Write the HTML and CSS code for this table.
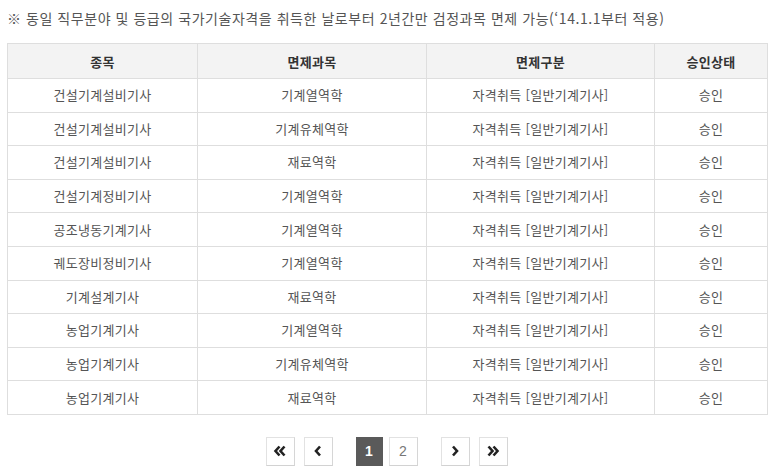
FILE: index.html
```html
<!DOCTYPE html>
<html lang="ko">
<head>
<meta charset="utf-8">
<link rel="stylesheet" href="styles.css">
</head>
<body>
<div class="wrap">
  <p class="note">※ 동일 직무분야 및 등급의 국가기술자격을 취득한 날로부터 2년간만 검정과목 면제 가능(‘14.1.1부터 적용)</p>
  <table class="grid">
    <colgroup>
      <col class="c1"><col class="c2"><col class="c3"><col class="c4">
    </colgroup>
    <thead>
      <tr><th>종목</th><th>면제과목</th><th>면제구분</th><th>승인상태</th></tr>
    </thead>
    <tbody>
      <tr><td>건설기계설비기사</td><td>기계열역학</td><td>자격취득 [일반기계기사]</td><td>승인</td></tr>
      <tr><td>건설기계설비기사</td><td>기계유체역학</td><td>자격취득 [일반기계기사]</td><td>승인</td></tr>
      <tr><td>건설기계설비기사</td><td>재료역학</td><td>자격취득 [일반기계기사]</td><td>승인</td></tr>
      <tr><td>건설기계정비기사</td><td>기계열역학</td><td>자격취득 [일반기계기사]</td><td>승인</td></tr>
      <tr><td>공조냉동기계기사</td><td>기계열역학</td><td>자격취득 [일반기계기사]</td><td>승인</td></tr>
      <tr><td>궤도장비정비기사</td><td>기계열역학</td><td>자격취득 [일반기계기사]</td><td>승인</td></tr>
      <tr><td>기계설계기사</td><td>재료역학</td><td>자격취득 [일반기계기사]</td><td>승인</td></tr>
      <tr><td>농업기계기사</td><td>기계열역학</td><td>자격취득 [일반기계기사]</td><td>승인</td></tr>
      <tr><td>농업기계기사</td><td>기계유체역학</td><td>자격취득 [일반기계기사]</td><td>승인</td></tr>
      <tr><td>농업기계기사</td><td>재료역학</td><td>자격취득 [일반기계기사]</td><td>승인</td></tr>
    </tbody>
  </table>
  <nav class="pager">
    <div class="group">
      <a class="pbtn" href="#" aria-label="처음"><svg width="14" height="12" viewBox="0 0 14 12"><path d="M6.5 1.5 L2.5 6 L6.5 10.5 M11.5 1.5 L7.5 6 L11.5 10.5" fill="none" stroke="#222" stroke-width="2.6"/></svg></a>
      <a class="pbtn" href="#" aria-label="이전"><svg width="10" height="12" viewBox="0 0 10 12"><path d="M7 1.5 L3 6 L7 10.5" fill="none" stroke="#222" stroke-width="2.6"/></svg></a>
    </div>
    <div class="group pages">
      <a class="pnum active" href="#">1</a>
      <a class="pnum" href="#">2</a>
    </div>
    <div class="group">
      <a class="pbtn" href="#" aria-label="다음"><svg width="10" height="12" viewBox="0 0 10 12"><path d="M3 1.5 L7 6 L3 10.5" fill="none" stroke="#222" stroke-width="2.6"/></svg></a>
      <a class="pbtn" href="#" aria-label="마지막"><svg width="14" height="12" viewBox="0 0 14 12"><path d="M2.5 1.5 L6.5 6 L2.5 10.5 M7.5 1.5 L11.5 6 L7.5 10.5" fill="none" stroke="#222" stroke-width="2.6"/></svg></a>
    </div>
  </nav>
</div>
</body>
</html>
```
FILE: styles.css
```css
html, body {
  margin: 0;
  padding: 0;
  background: #fff;
}
body {
  font-family: "Noto Sans CJK KR", "Noto Sans", sans-serif;
  color: #555;
  font-size: 13px;
}
.wrap {
  padding: 8px 6px 0 7px;
}
.note {
  margin: 0;
  font-size: 14px;
  line-height: 20px;
  color: #555;
  letter-spacing: 0.55px;
  white-space: nowrap;
}
.grid {
  margin-top: 15px;
  width: 760px;
  border-collapse: collapse;
  table-layout: fixed;
}
.c1 { width: 190px; }
.c2 { width: 229px; }
.c3 { width: 228px; }
.c4 { width: 113px; }
.grid th, .grid td {
  border: 1px solid #dedede;
  text-align: center;
  padding: 0;
  font-size: 13px;
  letter-spacing: 0.3px;
}
.grid th {
  background: #f3f3f3;
  color: #333;
  font-weight: 700;
  height: 34px;
}
.grid td {
  height: 31.6px;
  padding-bottom: 1px;
  color: #555;
}
.pager {
  display: flex;
  justify-content: center;
  align-items: center;
  gap: 23px;
  margin-top: 22px;
}
.group {
  display: flex;
  gap: 9px;
}
.pages {
  gap: 6px;
}
.pbtn, .pnum {
  box-sizing: border-box;
  width: 29px;
  height: 29px;
  display: flex;
  align-items: center;
  justify-content: center;
  border: 1px solid #e2e2e2;
  border-bottom-color: #d2d2d2;
  border-right-color: #d6d6d6;
  text-decoration: none;
  background: #fff;
}
.pnum {
  color: #777;
  font-family: "Liberation Sans", Arial, sans-serif;
  font-size: 14px;
}
.pnum.active {
  width: 27px;
  background: #5a5a5a;
  border-color: #5a5a5a;
  color: #fff;
  font-weight: bold;
}
```
